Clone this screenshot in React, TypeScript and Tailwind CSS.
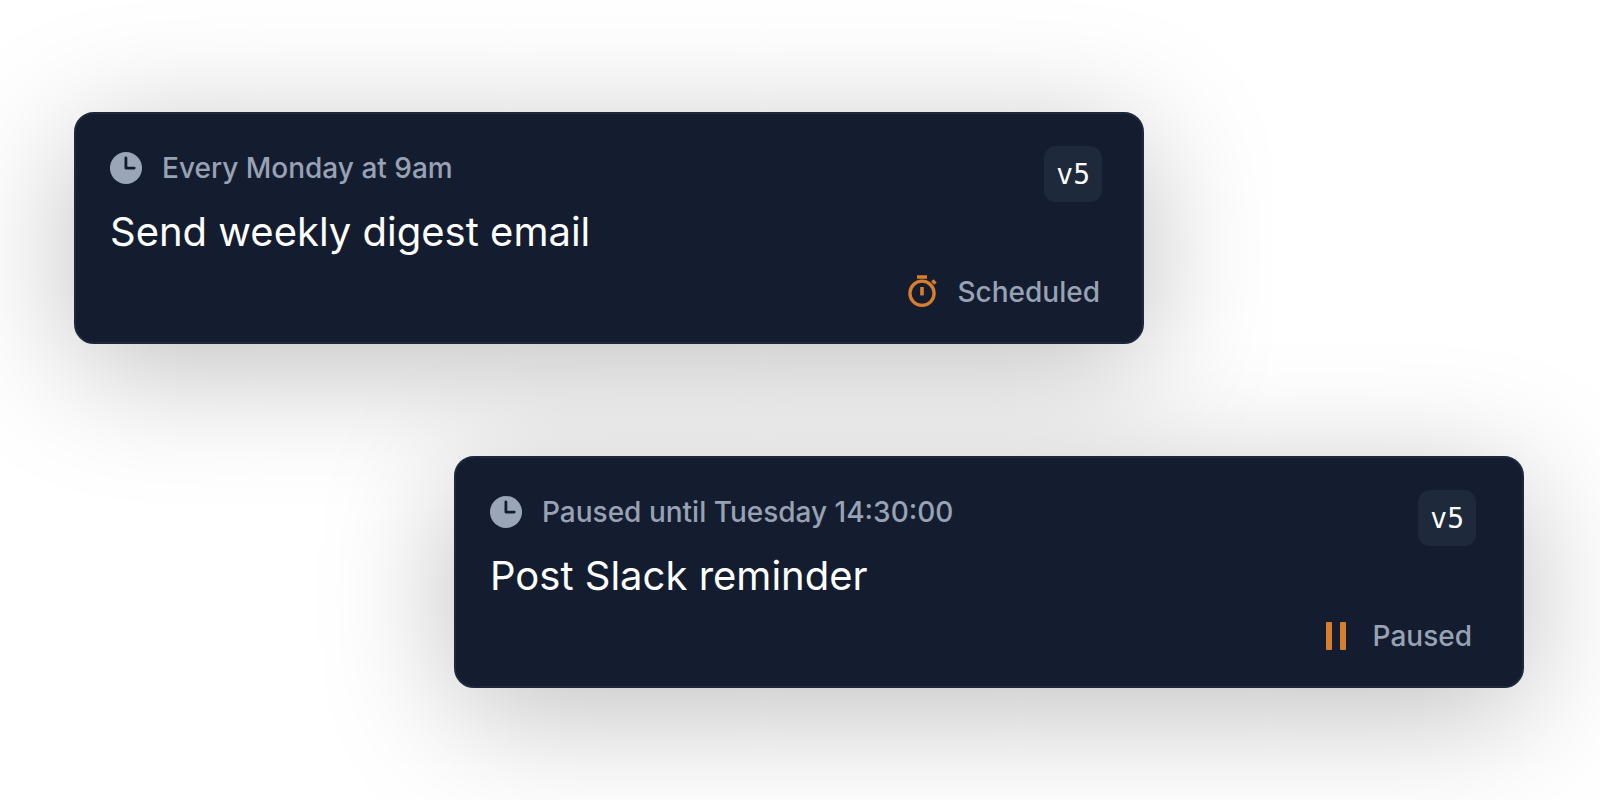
import type { ReactNode } from "react";

function ClockIcon() {
  return (
    <svg viewBox="0 0 32 32" className="size-8 shrink-0" aria-hidden="true">
      <circle cx="16" cy="16" r="16" fill="#9aa5b8" />
      <path
        d="M15.9 6V16.1h8.3"
        fill="none"
        stroke="#141d2f"
        strokeWidth="2.8"
        strokeLinecap="round"
        strokeLinejoin="round"
      />
    </svg>
  );
}

function StopwatchIcon() {
  return (
    <svg viewBox="0 0 32 32" className="size-8 shrink-0 overflow-visible" aria-hidden="true">
      <g fill="none" stroke="#d97e2a">
        <circle cx="17" cy="17.3" r="12.1" strokeWidth="3.3" />
        <path d="M12 1h10" strokeWidth="3.5" />
        <path d="M17 11v8.4" strokeWidth="3.6" />
        <path d="M27.3 4.4l3.2 3.2" strokeWidth="3.4" />
      </g>
    </svg>
  );
}

function PauseIcon() {
  return (
    <svg viewBox="0 0 32 32" className="size-8 shrink-0" aria-hidden="true">
      <rect x="5" y="2" width="6" height="28" rx="1" fill="#d97e2a" />
      <rect x="19" y="2" width="6" height="28" rx="1" fill="#d97e2a" />
    </svg>
  );
}

type JobCardProps = {
  schedule: string;
  title: string;
  version: string;
  status: string;
  icon: ReactNode;
  className: string;
  statusClassName: string;
};

function JobCard({ schedule, title, version, status, icon, className, statusClassName }: JobCardProps) {
  return (
    <article
      className={`w-full max-w-[1070px] rounded-[20px] border-2 border-[#1d283d] bg-[#141d2f] pt-8 pb-[34px] pl-[34px] shadow-[0_24px_130px_rgba(0,0,0,0.26)] ${className}`}
    >
      <div className="flex items-start justify-between gap-6">
        <div className="flex flex-col gap-6 pt-1.5">
          <p className="flex items-center gap-5 text-[28px] leading-8 font-medium text-[#98a2b5]">
            <ClockIcon />
            {schedule}
          </p>
          <h2 className="text-[40px] leading-12 text-white">{title}</h2>
        </div>
        <span className="h-14 rounded-xl bg-[#1e293b] px-3 pt-px font-['DejaVu_Sans_Mono',monospace] text-[28px] leading-14 text-white">
          {version}
        </span>
      </div>
      <p
        className={`mt-5 flex items-center justify-end gap-5 text-[28px] leading-8 font-medium text-[#98a2b5] ${statusClassName}`}
      >
        {icon}
        {status}
      </p>
    </article>
  );
}

export default function App() {
  return (
    <main className="flex min-h-screen flex-col gap-28 overflow-hidden bg-white py-28 pr-19 pl-[74px] font-['Inter',sans-serif]">
      <JobCard
        schedule="Every Monday at 9am"
        title="Send weekly digest email"
        version="v5"
        status="Scheduled"
        icon={<StopwatchIcon />}
        className="self-start pr-10"
        statusClassName="pr-0.5"
      />
      <JobCard
        schedule="Paused until Tuesday 14:30:00"
        title="Post Slack reminder"
        version="v5"
        status="Paused"
        icon={<PauseIcon />}
        className="self-end pr-[46px]"
        statusClassName="pr-1"
      />
    </main>
  );
}
